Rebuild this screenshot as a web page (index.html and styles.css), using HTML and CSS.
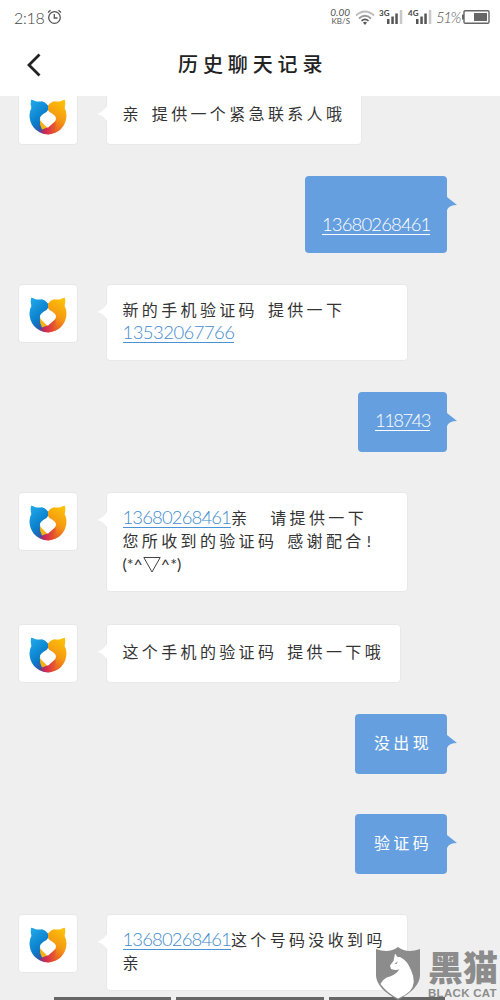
FILE: index.html
```
<!DOCTYPE html>
<html lang="zh-CN">
<head>
<meta charset="utf-8">
<title>历史聊天记录</title>
<link rel="stylesheet" href="styles.css">
</head>
<body>
<svg class="defs" width="0" height="0" aria-hidden="true">
  <defs>
    <linearGradient id="blue" x1="0.2" y1="0" x2="0.7" y2="1"><stop offset="0" stop-color="#1ea8e8"/><stop offset="0.6" stop-color="#0a7dcb"/><stop offset="1" stop-color="#4a4396"/></linearGradient>
    <linearGradient id="gold" x1="0.7" y1="0" x2="0.3" y2="1"><stop offset="0" stop-color="#fbc108"/><stop offset="0.5" stop-color="#f59a12"/><stop offset="1" stop-color="#e4472a"/></linearGradient>
    <linearGradient id="red" x1="0" y1="0" x2="1" y2="0"><stop offset="0" stop-color="#7a3480"/><stop offset="0.4" stop-color="#d62a50"/><stop offset="1" stop-color="#e9602a"/></linearGradient>
    <symbol id="bear" viewBox="0 0 38 36">
      <path fill="url(#blue)" d="M2 .8Q4.500 1 6.500 2.200Q10 2.600 13 2.200Q16.500 3 19 6.500V20L17 35Q10 34.500 5 29Q.3 23 .5 16Q.6 12 2.400 9Q1.200 5 2 .8Z"/>
      <path fill="url(#gold)" d="M36 .8Q33.500 1 31.500 2.200Q28 2.600 25 2.200Q21.500 3 19 6.500V20L17 35Q26 36 32 30Q37.500 24 37.500 16Q37.400 12 35.600 9Q36.800 5 36 .8Z"/>
      <path fill="url(#red)" d="M10.500 32.500 19 28 26.500 22.500Q28 29 22.500 35Q16 36.500 10.500 32.500Z"/>
      <path fill="#f6b316" d="M10.800 20Q10.500 26 13 30.500L18.500 28.500Z"/>
      <path fill="#fff" d="M19 11Q20 13.500 23.500 14.800Q29.300 18.500 25.500 22.700L19.500 28.200Q18.500 28.800 17.600 28L12.300 22.700Q8.700 18.500 14.500 14.800Q18 13.500 19 11Z"/>
    </symbol>
    <symbol id="tail-left" viewBox="0 0 10 16"><path fill="#fff" d="M10 0 Q6 6 0 8 Q6 9 10 15Z"/></symbol>
    <symbol id="tail-right" viewBox="0 0 11 16"><path fill="#659fdf" d="M0 0 L1 1 L11 9 Q3 9 1 14 L0 15Z"/></symbol>
  </defs>
</svg>
<div class="screen">
  <header class="top">
    <div class="status">
      <span class="clock">2:18</span>
      <svg class="alarm" width="15" height="16" viewBox="0 0 15 16" fill="none" stroke="#555" stroke-width="1.300"><circle cx="7.500" cy="8.500" r="5.800"/><path d="M7.300 5v4h3.200M1 3.500 3.500 1.300M11.500 1.300 14 3.500"/></svg>
      <span class="speed"><span class="rate">0.00</span><span class="unit">KB/S</span></span>
      <svg class="wifi" width="20" height="15" viewBox="0 0 20 15" fill="none" stroke-width="1.700"><path stroke="#bbb" d="M1 5.500Q10-2.500 19 5.500"/><path stroke="#999" d="M4 8.500Q10 3 16 8.500"/><path stroke="#555" d="M6.500 10.800Q10 8 13.500 10.800"/><path fill="#555" d="M8 12.500Q10 11 12 12.500L10 15Z"/></svg>
      <span class="net">3G</span>
      <svg class="bars" width="16" height="14" viewBox="0 0 16 14"><path fill="#555" d="M0 9h2.500v5H0zM4.300 6.500h2.500V14H4.300zM8.300 3.500h2.500V14H8.300z"/><path fill="#c8c8c8" d="M12.800 0h2.500v14h-2.500z"/></svg>
      <span class="net second">4G</span>
      <svg class="bars" width="16" height="14" viewBox="0 0 16 14"><path fill="#555" d="M0 9h2.500v5H0zM4.300 6.500h2.500V14H4.300zM8.300 3.500h2.500V14H8.300z"/><path fill="#c8c8c8" d="M12.800 0h2.500v14h-2.500z"/></svg>
      <span class="percent">51%</span>
      <svg class="battery" width="28" height="14" viewBox="0 0 28 14"><rect x="2" y=".7" width="25" height="12.600" rx="1.200" fill="none" stroke="#666" stroke-width="1.400"/><path fill="#666" d="M0 4.500h2v5H0zM12 3h13v8H12z"/></svg>
    </div>
    <div class="titlebar">
      <svg class="back" width="14" height="24" viewBox="0 0 14 24" fill="none" stroke="#222" stroke-width="2.800"><path d="M12.500 1.500 2 12l10.500 10.500"/></svg>
      <h1 class="title">历史聊天记录</h1>
    </div>
  </header>
  <main class="chat">
    <div class="row"><div class="avatar"><svg class="logo"><use href="#bear"/></svg></div>
      <div class="bubble single w256"><svg class="tail"><use href="#tail-left"/></svg><p>亲 提供一个紧急联系人哦</p></div></div>
    <div class="row mine gap31"><div class="bubble tall"><svg class="tail"><use href="#tail-right"/></svg><p><a>13680268461</a></p></div></div>
    <div class="row gap31"><div class="avatar"><svg class="logo"><use href="#bear"/></svg></div>
      <div class="bubble w302"><svg class="tail"><use href="#tail-left"/></svg><p>新的手机验证码 提供一下</p><p><a class="wide">13532067766</a></p></div></div>
    <div class="row mine gap31"><div class="bubble code"><svg class="tail"><use href="#tail-right"/></svg><p><a class="narrow">118743</a></p></div></div>
    <div class="row gap40"><div class="avatar"><svg class="logo"><use href="#bear"/></svg></div>
      <div class="bubble w302"><svg class="tail"><use href="#tail-left"/></svg><p><a>13680268461</a>亲 <span class="after-gap">请提供一下</span></p><p>您所收到的验证码 感谢配合<span class="bang">!</span></p><p class="kaomoji">(*^<svg class="tri" width="18" height="16" viewBox="0 0 18 16" fill="none" stroke="#444"><path d="M.8.500h16.400L9 15Z"/></svg>^*)</p></div></div>
    <div class="row gap32"><div class="avatar"><svg class="logo"><use href="#bear"/></svg></div>
      <div class="bubble single w295"><svg class="tail"><use href="#tail-left"/></svg><p>这个手机的验证码 提供一下哦</p></div></div>
    <div class="row mine gap31"><div class="bubble word"><svg class="tail"><use href="#tail-right"/></svg><p>没出现</p></div></div>
    <div class="row mine gap40"><div class="bubble word"><svg class="tail"><use href="#tail-right"/></svg><p>验证码</p></div></div>
    <div class="row gap40"><div class="avatar"><svg class="logo"><use href="#bear"/></svg></div>
      <div class="bubble w302"><svg class="tail"><use href="#tail-left"/></svg><p><a>13680268461</a>这个号码没收到吗</p><p>亲</p></div></div>
  </main>
  <div class="dock"><span class="d1"></span><span class="d2"></span><span class="d3"></span></div>
  <div class="watermark">
    <svg class="shield" width="46" height="53" viewBox="0 0 46 53"><path fill="#8c8c8c" d="M1 2Q14 7 23 0Q32 7 45 2V29Q44 42 23 53Q2 42 1 29Z"/><path fill="#fff" d="M20 6.500 22.500 10H25Q32 13 36 23Q42 36 35 44Q30 49 23 51.500Q12 46 5.500 37Q8 31 15 29.500Q22 27 24.500 22Q22 24 16 22L15 18.500 18.500 14Z"/><path fill="#8c8c8c" d="M19.500 16.500 23 14.500 21.500 17Z"/></svg>
    <div class="brand"><span class="brand-cn">黑猫</span><span class="brand-en">BLACK CAT</span></div>
  </div>
</div>
</body>
</html>
```

FILE: styles.css
```
* { box-sizing: border-box; }
body { margin: 0; background: #efefef; font-family: Lato, "Noto Sans CJK SC", sans-serif; }
.defs { position: absolute; }
.screen { position: relative; width: 500px; height: 1000px; overflow: hidden; background: #efefef; }
.top { position: relative; z-index: 2; height: 96px; background: #fff; }
.status { display: flex; align-items: center; height: 34px; padding-left: 14px; color: #666; }
.status > * { flex: none; }
.clock { width: 33px; font-size: 16px; font-weight: 300; letter-spacing: -.3px; color: #444; }
.alarm { margin-right: 266px; }
.speed { display: flex; flex-direction: column; align-items: flex-end; width: 22px; margin-top: -2px; color: #555; font-family: Lato, sans-serif; }
.rate { font-size: 10px; line-height: 10px; font-style: italic; }
.unit { font-size: 8px; line-height: 9px; }
.wifi { margin-left: 5px; }
.net { margin: -8px -1px 0 4px; width: 10px; font: bold 8px/10px Lato, sans-serif; color: #444; }
.second { margin-left: 5px; }
.bars { margin-left: -1px; }
.percent { margin-left: 4px; width: 27px; font-size: 15px; font-style: italic; font-weight: 300; letter-spacing: -1.4px; color: #555; }
.battery { margin-left: -1px; }
.titlebar { display: flex; align-items: center; height: 62px; padding-left: 27px; }
.title { margin: -3px 0 0 137px; font-size: 20px; line-height: 30px; font-weight: 500; letter-spacing: 4.9px; color: #222; white-space: nowrap; }
.chat { margin-top: -10px; }
.row { display: flex; align-items: flex-start; padding-left: 18px; gap: 28px; }
.mine { justify-content: flex-end; padding: 0 53px 0 0; }
.gap31 { margin-top: 31px; }
.gap32 { margin-top: 32px; }
.gap40 { margin-top: 40px; }
.avatar { display: flex; align-items: center; justify-content: center; width: 60px; height: 59px; background: #fff; border: 1px solid #e7e7e7; border-radius: 4px; }
.logo { width: 38px; height: 36px; margin-top: 3px; }
.bubble { position: relative; padding: 14px 15.5px 15px; border: 1px solid #e8e8e8; border-radius: 4px; background: #fff; color: #333; font-size: 16px; letter-spacing: 3.35px; word-spacing: 2.5px; white-space: nowrap; }
.bubble p { margin: 0; height: 23px; line-height: 22px; }
.single p { height: 28px; line-height: 26px; }
.bubble.single { height: 59px; }
.bubble a { display: inline-block; height: 21px; line-height: 21px; border-bottom: 1px solid #4b91d5; color: #438bce; font-size: 18.5px; font-weight: 300; letter-spacing: -.87px; }
.bubble .wide { letter-spacing: -.55px; }
.bubble .narrow { letter-spacing: -1.6px; }
.after-gap { margin-left: 10px; }
.w256 { width: 256px; }
.w295 { width: 295px; }
.w302 { width: 302px; }
.tail { position: absolute; left: -10px; top: 19px; width: 10px; height: 16px; }
.mine .bubble { height: 60px; padding: 18px 17px; border: 0; background: #659fdf; color: #fff; }
.mine .bubble a { color: #fff; border-color: #fff; }
.mine .tail { left: auto; right: -10px; top: 20px; width: 11px; }
.mine .tall { width: 142px; height: 77px; padding-top: 38px; }
.mine .code { width: 89px; }
.mine .word { width: 92px; padding-left: 19px; }
.kaomoji { letter-spacing: 0; }
.tri { vertical-align: -3px; }
.bang { margin-left: 2px; }
.dock { position: absolute; left: 54px; bottom: 0; display: flex; gap: 5px; height: 3px; }
.dock span { background: #666; }
.d1 { width: 117px; }
.d2 { width: 148px; }
.d3 { width: 116px; }
.watermark { position: absolute; left: 375px; top: 947px; display: flex; gap: 7px; color: #8c8c8c; }
.brand { display: flex; flex-direction: column; white-space: nowrap; }
.brand-cn { font: 900 35px/38px "Noto Sans CJK SC", sans-serif; height: 39px; }
.brand-en { font: bold 11.5px/12px "Liberation Sans", sans-serif; letter-spacing: .3px; padding-top: 1px; }
```
